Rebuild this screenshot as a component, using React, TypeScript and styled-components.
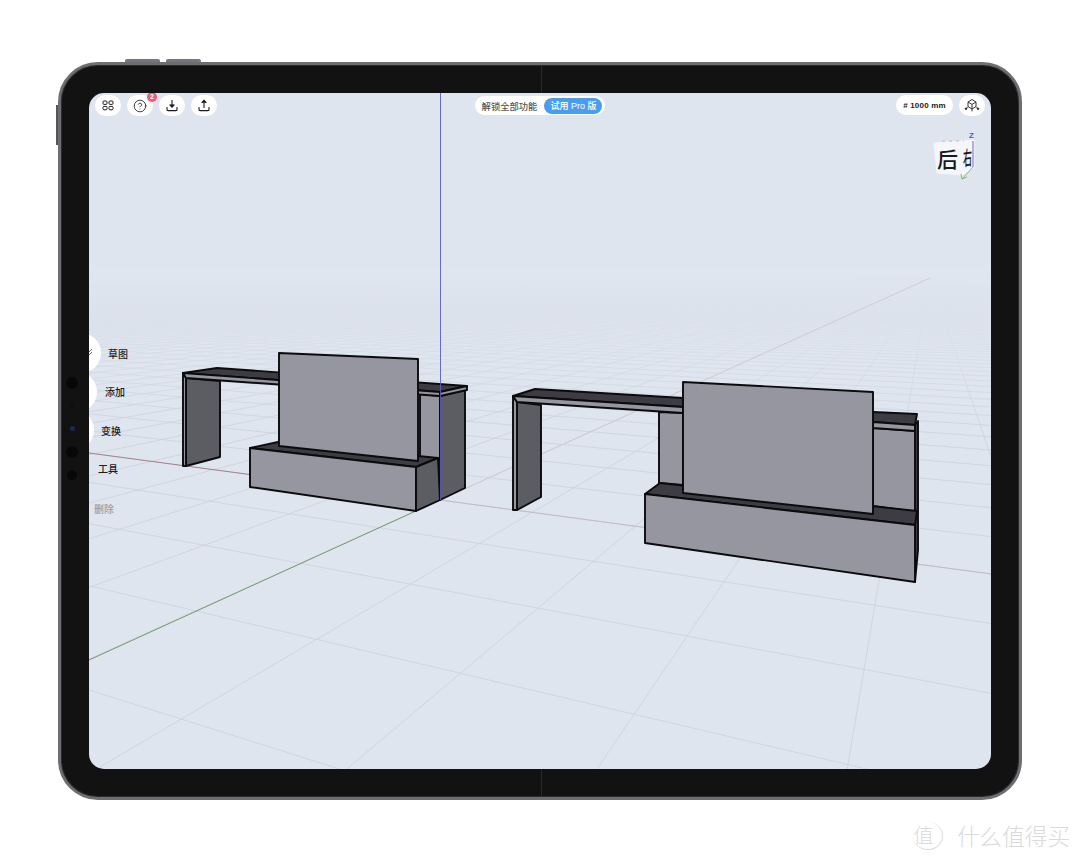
import React, { useMemo } from 'react';
import styled, { createGlobalStyle } from 'styled-components';
import { CircleHelp } from 'lucide-react';

const GlobalStyle = createGlobalStyle`
	html, body {
		margin: 0;
		padding: 0;
		background: #fff;
		font-family: "Liberation Sans", "Noto Sans CJK SC", sans-serif;
	}
`;

const Page = styled.div`
	position: relative;
	width: 1080px;
	height: 861px;
	padding: 62px 0 0 58px;
	box-sizing: border-box;
	overflow: hidden;
`;

const Tablet = styled.div`
	position: relative;
	width: 964px;
	height: 738px;
	box-sizing: border-box;
	padding: 28px;
	background: #121212;
	border: 3px solid #6e6e72;
	border-radius: 40px;
	box-shadow: inset 0 0 0 1px #2c2c2e;

	&::before,
	&::after {
		content: '';
		position: absolute;
		left: 480px;
		width: 1px;
		height: 28px;
		background: #2a2a2c;
	}

	&::before {
		top: 0;
	}

	&::after {
		bottom: 0;
	}
`;

const TopKey = styled.div<{ $left: number }>`
	position: absolute;
	top: -6px;
	left: ${(props) => props.$left}px;
	width: 35px;
	height: 3px;
	border-radius: 2px 2px 0 0;
	background: #77777b;
`;

const SideKey = styled.div`
	position: absolute;
	top: 40px;
	left: -5px;
	width: 2px;
	height: 40px;
	background: #55555a;
`;

const Sensors = styled.div`
	position: absolute;
	left: 0;
	top: 306px;
	width: 22px;
	display: grid;
	grid-auto-rows: 23px;
	place-items: center;
`;

const Sensor = styled.span<{ $size: number; $color?: string }>`
	display: block;
	width: ${(props) => props.$size}px;
	height: ${(props) => props.$size}px;
	border-radius: 50%;
	background: ${(props) => props.$color || '#070707'};
`;

const Screen = styled.div`
	position: relative;
	width: 902px;
	height: 676px;
	border-radius: 15px;
	overflow: hidden;
	background: #dfe5ef;
`;

const Viewport = styled.svg`
	position: absolute;
	inset: 0;
	width: 100%;
	height: 100%;
`;

const TopBar = styled.div`
	position: absolute;
	top: 2px;
	left: 6px;
	right: 6px;
	display: grid;
	grid-template-columns: 1fr auto 1fr;
	align-items: center;
`;

const BarGroup = styled.div<{ $end?: boolean }>`
	display: flex;
	gap: 6px;
	justify-content: ${(props) => (props.$end ? 'flex-end' : 'flex-start')};
`;

const RoundButton = styled.div`
	position: relative;
	width: 26px;
	height: 21px;
	display: flex;
	align-items: center;
	justify-content: center;
	background: #fff;
	border-radius: 11px;
	color: #1c1c1e;
`;

const Badge = styled.span`
	position: absolute;
	top: -3px;
	right: -4px;
	width: 10px;
	height: 10px;
	border-radius: 50%;
	background: #ec5d72;
	color: #fff;
	font-size: 7px;
	font-weight: 700;
	line-height: 10px;
	text-align: center;
`;

const UnlockPill = styled.div`
	display: flex;
	align-items: center;
	height: 19px;
	padding: 0 3px 0 7px;
	gap: 7px;
	background: #fff;
	border-radius: 10px;
	font-size: 9.3px;
	font-weight: 500;
	color: #555;
`;

const ProButton = styled.span`
	display: block;
	height: 16px;
	line-height: 16px;
	padding: 0 6px;
	border-radius: 8px;
	background: #4a9dee;
	color: #fff;
	font-size: 9px;
	font-weight: 500;
`;

const UnitPill = styled.div`
	height: 20px;
	width: 57px;
	display: flex;
	align-items: center;
	justify-content: center;
	background: #fff;
	border-radius: 10px;
	font-size: 8px;
	font-weight: 700;
	letter-spacing: 0.2px;
	color: #222;
`;

const ViewCube = styled.svg`
	position: absolute;
	top: 32px;
	right: 6px;
	width: 60px;
	height: 65px;
`;

const SideMenu = styled.div`
	position: absolute;
	top: 241px;
	left: 0;
	display: flex;
	flex-direction: column;
`;

const MenuRow = styled.div<{ $indent: number; $muted?: boolean }>`
	display: flex;
	align-items: center;
	height: 38.5px;
	margin-top: ${(props) => (props.$muted ? 1 : 0)}px;
	padding-left: ${(props) => props.$indent}px;
	font-size: 10px;
	font-weight: 500;
	color: ${(props) => (props.$muted ? '#9a9ca4' : '#1c1c1e')};
`;

const MenuDisc = styled.span<{ $reach: number }>`
	position: absolute;
	left: ${(props) => props.$reach - 40}px;
	width: 40px;
	height: 40px;
	padding-right: 8px;
	box-sizing: border-box;
	border-radius: 50%;
	background: #fff;
	display: flex;
	align-items: center;
	justify-content: flex-end;
`;

const MenuLabel = styled.span`
	position: relative;
`;

const Watermark = styled.div`
	position: absolute;
	right: 10px;
	bottom: 11px;
	display: flex;
	align-items: center;
	gap: 14px;
	color: #dadada;
	font-family: "Noto Sans CJK SC", sans-serif;
	font-size: 22.6px;
	font-weight: 300;
	line-height: 28px;
`;

const WatermarkSeal = styled.span`
	display: block;
	width: 30px;
	height: 28px;
	box-sizing: border-box;
	padding-right: 8px;
	border-radius: 50%;
	border-right: 1px solid #dadada;
	border-bottom: 1px solid #dadada;
	font-size: 20px;
	line-height: 26px;
	text-align: center;
`;

const VP_LEFT = { x: -1217, y: 278 };
const VP_RIGHT = { x: 930, y: 278 };
const ORIGIN = { x: 440, y: 500 };
const A = 0.0527;
const B = 0.111;

function project(u: number, v: number) {
	const w = 1 + u * A + v * B;
	return {
		x: (u * A * VP_LEFT.x + v * B * VP_RIGHT.x + ORIGIN.x) / w,
		y: (u * A * VP_LEFT.y + v * B * VP_RIGHT.y + ORIGIN.y) / w,
	};
}

function gridLines() {
	const lines: { x1: number; y1: number; x2: number; y2: number }[] = [];
	for (let u = -18; u <= 300; u += 1) {
		const p = project(u, 0);
		const k = 600 / (p.y - VP_RIGHT.y);
		lines.push({
			x1: VP_RIGHT.x,
			y1: VP_RIGHT.y,
			x2: VP_RIGHT.x + (p.x - VP_RIGHT.x) * k,
			y2: VP_RIGHT.y + 600,
		});
	}
	for (let v = -8; v <= 300; v += 1) {
		const p = project(0, v);
		const k = (1100 - VP_LEFT.x) / (p.x - VP_LEFT.x);
		lines.push({
			x1: VP_LEFT.x,
			y1: VP_LEFT.y,
			x2: 1100,
			y2: VP_LEFT.y + (p.y - VP_LEFT.y) * k,
		});
	}
	return lines;
}

type Face = { points: string; fill: string };

const LIGHT = '#9696a1';
const SIDE = '#5c5c63';
const TOP = '#3d3c42';

const leftModel: Face[] = [
	{ points: '420,394 440,396 440,459 420,458', fill: LIGHT },
	{ points: '186,378 220,381 220,457 186,466', fill: SIDE },
	{ points: '183,373 186,378 186,466 183,466', fill: LIGHT },
	{ points: '183,373 217,368 467,386 440,392', fill: TOP },
	{ points: '183,373 440,392 440,396 186,378', fill: LIGHT },
	{ points: '440,396 465,390 465,488 440,500', fill: SIDE },
	{ points: '440,392 467,386 467,390 440,396', fill: LIGHT },
	{ points: '250,448 278,442 438,458 416,467', fill: TOP },
	{ points: '250,448 416,467 416,511 250,487', fill: LIGHT },
	{ points: '416,467 438,458 440,500 416,511', fill: SIDE },
	{ points: '279,353 418,359 418,461 279,446', fill: LIGHT },
];

const rightModel: Face[] = [
	{ points: '659,412 683,413 683,485 659,483', fill: LIGHT },
	{ points: '873,428 917,431 917,512 873,506', fill: LIGHT },
	{ points: '517,402 541,405 541,497 517,510', fill: SIDE },
	{ points: '513,396 517,402 517,510 513,510', fill: LIGHT },
	{ points: '513,396 535,389 683,398 683,407', fill: TOP },
	{ points: '513,396 683,407 683,413 517,402', fill: LIGHT },
	{ points: '873,412 917,414 915,425 873,422', fill: TOP },
	{ points: '873,422 915,425 915,431 873,428', fill: LIGHT },
	{ points: '915,425 918,421 918,550 915,582', fill: TOP },
	{ points: '645,494 660,483 917,511 915,525', fill: TOP },
	{ points: '645,494 915,525 915,582 645,543', fill: LIGHT },
	{ points: '683,382 873,392 873,514 683,493', fill: LIGHT },
];

function Model({ faces }: { faces: Face[] }) {
	return (
		<g stroke="#0b0b0d" strokeWidth="1.9" strokeLinejoin="round">
			{faces.map((face) => (
				<polygon key={face.points} points={face.points} fill={face.fill} />
			))}
		</g>
	);
}

function Scene() {
	const lines = useMemo(gridLines, []);
	return (
		<Viewport viewBox="89 93 902 676">
			<defs>
				<linearGradient id="haze" x1="0" y1="0" x2="0" y2="1">
					<stop offset="0" stopColor="#e0e6f0" stopOpacity="1" />
					<stop offset="0.15" stopColor="#e0e6f0" stopOpacity="0.92" />
					<stop offset="0.45" stopColor="#e0e6f0" stopOpacity="0.65" />
					<stop offset="1" stopColor="#e0e6f0" stopOpacity="0" />
				</linearGradient>
			</defs>
			<g stroke="#c9ced9" strokeWidth="0.7">
				{lines.map((l, i) => (
					<line key={i} x1={l.x1} y1={l.y1} x2={l.x2} y2={l.y2} />
				))}
			</g>
			<rect x="89" y="270" width="902" height="160" fill="url(#haze)" />
			<line x1="440" y1="500" x2="991" y2="574" stroke="#c4bac4" strokeWidth="1" />
			<line x1="89" y1="453" x2="440" y2="500" stroke="#a5808a" strokeWidth="1" />
			<line x1="440" y1="500" x2="930" y2="278" stroke="#cdc8d3" strokeWidth="0.9" />
			<line x1="89" y1="660" x2="440" y2="500" stroke="#6f9a6c" strokeWidth="1" />
			<Model faces={leftModel} />
			<Model faces={rightModel} />
			<line x1="440.5" y1="93" x2="440.5" y2="500" stroke="#5a5cc0" strokeWidth="0.9" />
		</Viewport>
	);
}

function GridIcon() {
	return (
		<svg width="12" height="11" viewBox="0 0 12 11" fill="none" stroke="currentColor" strokeWidth="1">
			<rect x="1" y="1" width="4" height="3.4" rx="1" />
			<rect x="7" y="1" width="4" height="3.4" rx="1" />
			<rect x="1" y="6.4" width="4" height="3.4" rx="1" />
			<rect x="7" y="6.4" width="4" height="3.4" rx="1" />
		</svg>
	);
}

function TrayIcon({ up }: { up?: boolean }) {
	return (
		<svg width="12" height="13" viewBox="0 0 12 13" fill="none" stroke="currentColor" strokeWidth="1.1">
			<path d="M1 8v2.6c0 .6.4 1 1 1h8c.6 0 1-.4 1-1V8" />
			{up ? (
				<>
					<path d="M6 9V1.6" />
					<path d="M3.6 3.8 6 1.3l2.4 2.5" fill="currentColor" />
				</>
			) : (
				<>
					<path d="M6 1v7" />
					<path d="M3.6 5.6 6 8.1l2.4-2.5" fill="currentColor" />
				</>
			)}
		</svg>
	);
}

function IsoIcon() {
	return (
		<svg width="16" height="15" viewBox="0 0 16 15" fill="none" stroke="#222" strokeWidth="0.9">
			<path d="M8 1.5 12 4v4.6L8 11 4 8.6V4z" />
			<path d="M4 4l4 2.4L12 4M8 6.4V11" />
			<path d="M4 8.6 2 10.6M12 8.6l2 2M8 11v2.4" />
			<circle cx="2" cy="10.8" r="0.8" fill="#222" />
			<circle cx="14" cy="10.8" r="0.8" fill="#222" />
		</svg>
	);
}

function SketchGlyph() {
	return (
		<svg width="6" height="12" viewBox="0 0 6 12" fill="none" stroke="#555" strokeWidth="0.9">
			<path d="M0 7 5 2M0 10 5 5" />
		</svg>
	);
}

function Cube() {
	const faceFont = '"Noto Sans CJK SC", sans-serif';
	return (
		<ViewCube viewBox="925 125 60 65">
			<path
				d="M935 144 L962 142 L973 141 L973 167 L962 174 L938 172 Z"
				fill="#f5f6f9"
				stroke="#f5f6f9"
				strokeWidth="3"
				strokeLinejoin="round"
			/>
			<path d="M942 141 H964" stroke="#b4b7c0" strokeWidth="1" strokeDasharray="3 4" />
			<text x="937" y="167" fontSize="21" fontWeight="500" fill="#1a1a1a" fontFamily={faceFont}>
				后
			</text>
			<text
				x="0"
				y="0"
				fontSize="20"
				fontWeight="500"
				fill="#1a1a1a"
				fontFamily={faceFont}
				transform="translate(963 166) skewY(-8) scale(0.45 1)"
			>
				右
			</text>
			<path d="M973 141 V167" stroke="#6a6cc4" strokeWidth="1" />
			<path d="M973 167 L962 179 M962 179 L961 174 M962 179 L967 177" stroke="#86b878" strokeWidth="1" fill="none" />
			<text x="969" y="138" fontSize="8" fontWeight="700" fill="#5a5cc0">
				Z
			</text>
		</ViewCube>
	);
}

function App() {
	return (
		<Page>
			<GlobalStyle />
			<Tablet>
				<TopKey $left={64} />
				<TopKey $left={105} />
				<SideKey />
				<Sensors>
					<Sensor $size={12} />
					<Sensor $size={2} />
					<Sensor $size={5} $color="#1b2a55" />
					<Sensor $size={12} />
					<Sensor $size={10} />
				</Sensors>
				<Screen>
					<Scene />
					<TopBar>
						<BarGroup>
							<RoundButton>
								<GridIcon />
							</RoundButton>
							<RoundButton>
								<CircleHelp size={14} strokeWidth={1.4} />
								<Badge>2</Badge>
							</RoundButton>
							<RoundButton>
								<TrayIcon />
							</RoundButton>
							<RoundButton>
								<TrayIcon up />
							</RoundButton>
						</BarGroup>
						<UnlockPill>
							解锁全部功能
							<ProButton>试用 Pro 版</ProButton>
						</UnlockPill>
						<BarGroup $end>
							<UnitPill># 1000 mm</UnitPill>
							<RoundButton>
								<IsoIcon />
							</RoundButton>
						</BarGroup>
					</TopBar>
					<Cube />
					<SideMenu>
						<MenuRow $indent={19}>
							<MenuDisc $reach={12}>
								<SketchGlyph />
							</MenuDisc>
							<MenuLabel>草图</MenuLabel>
						</MenuRow>
						<MenuRow $indent={16}>
							<MenuDisc $reach={8} />
							<MenuLabel>添加</MenuLabel>
						</MenuRow>
						<MenuRow $indent={12}>
							<MenuDisc $reach={5} />
							<MenuLabel>变换</MenuLabel>
						</MenuRow>
						<MenuRow $indent={9}>
							<MenuLabel>工具</MenuLabel>
						</MenuRow>
						<MenuRow $indent={5} $muted>
							<MenuLabel>删除</MenuLabel>
						</MenuRow>
					</SideMenu>
				</Screen>
			</Tablet>
			<Watermark>
				<WatermarkSeal>值</WatermarkSeal>
				什么值得买
			</Watermark>
		</Page>
	);
}

export default App;
